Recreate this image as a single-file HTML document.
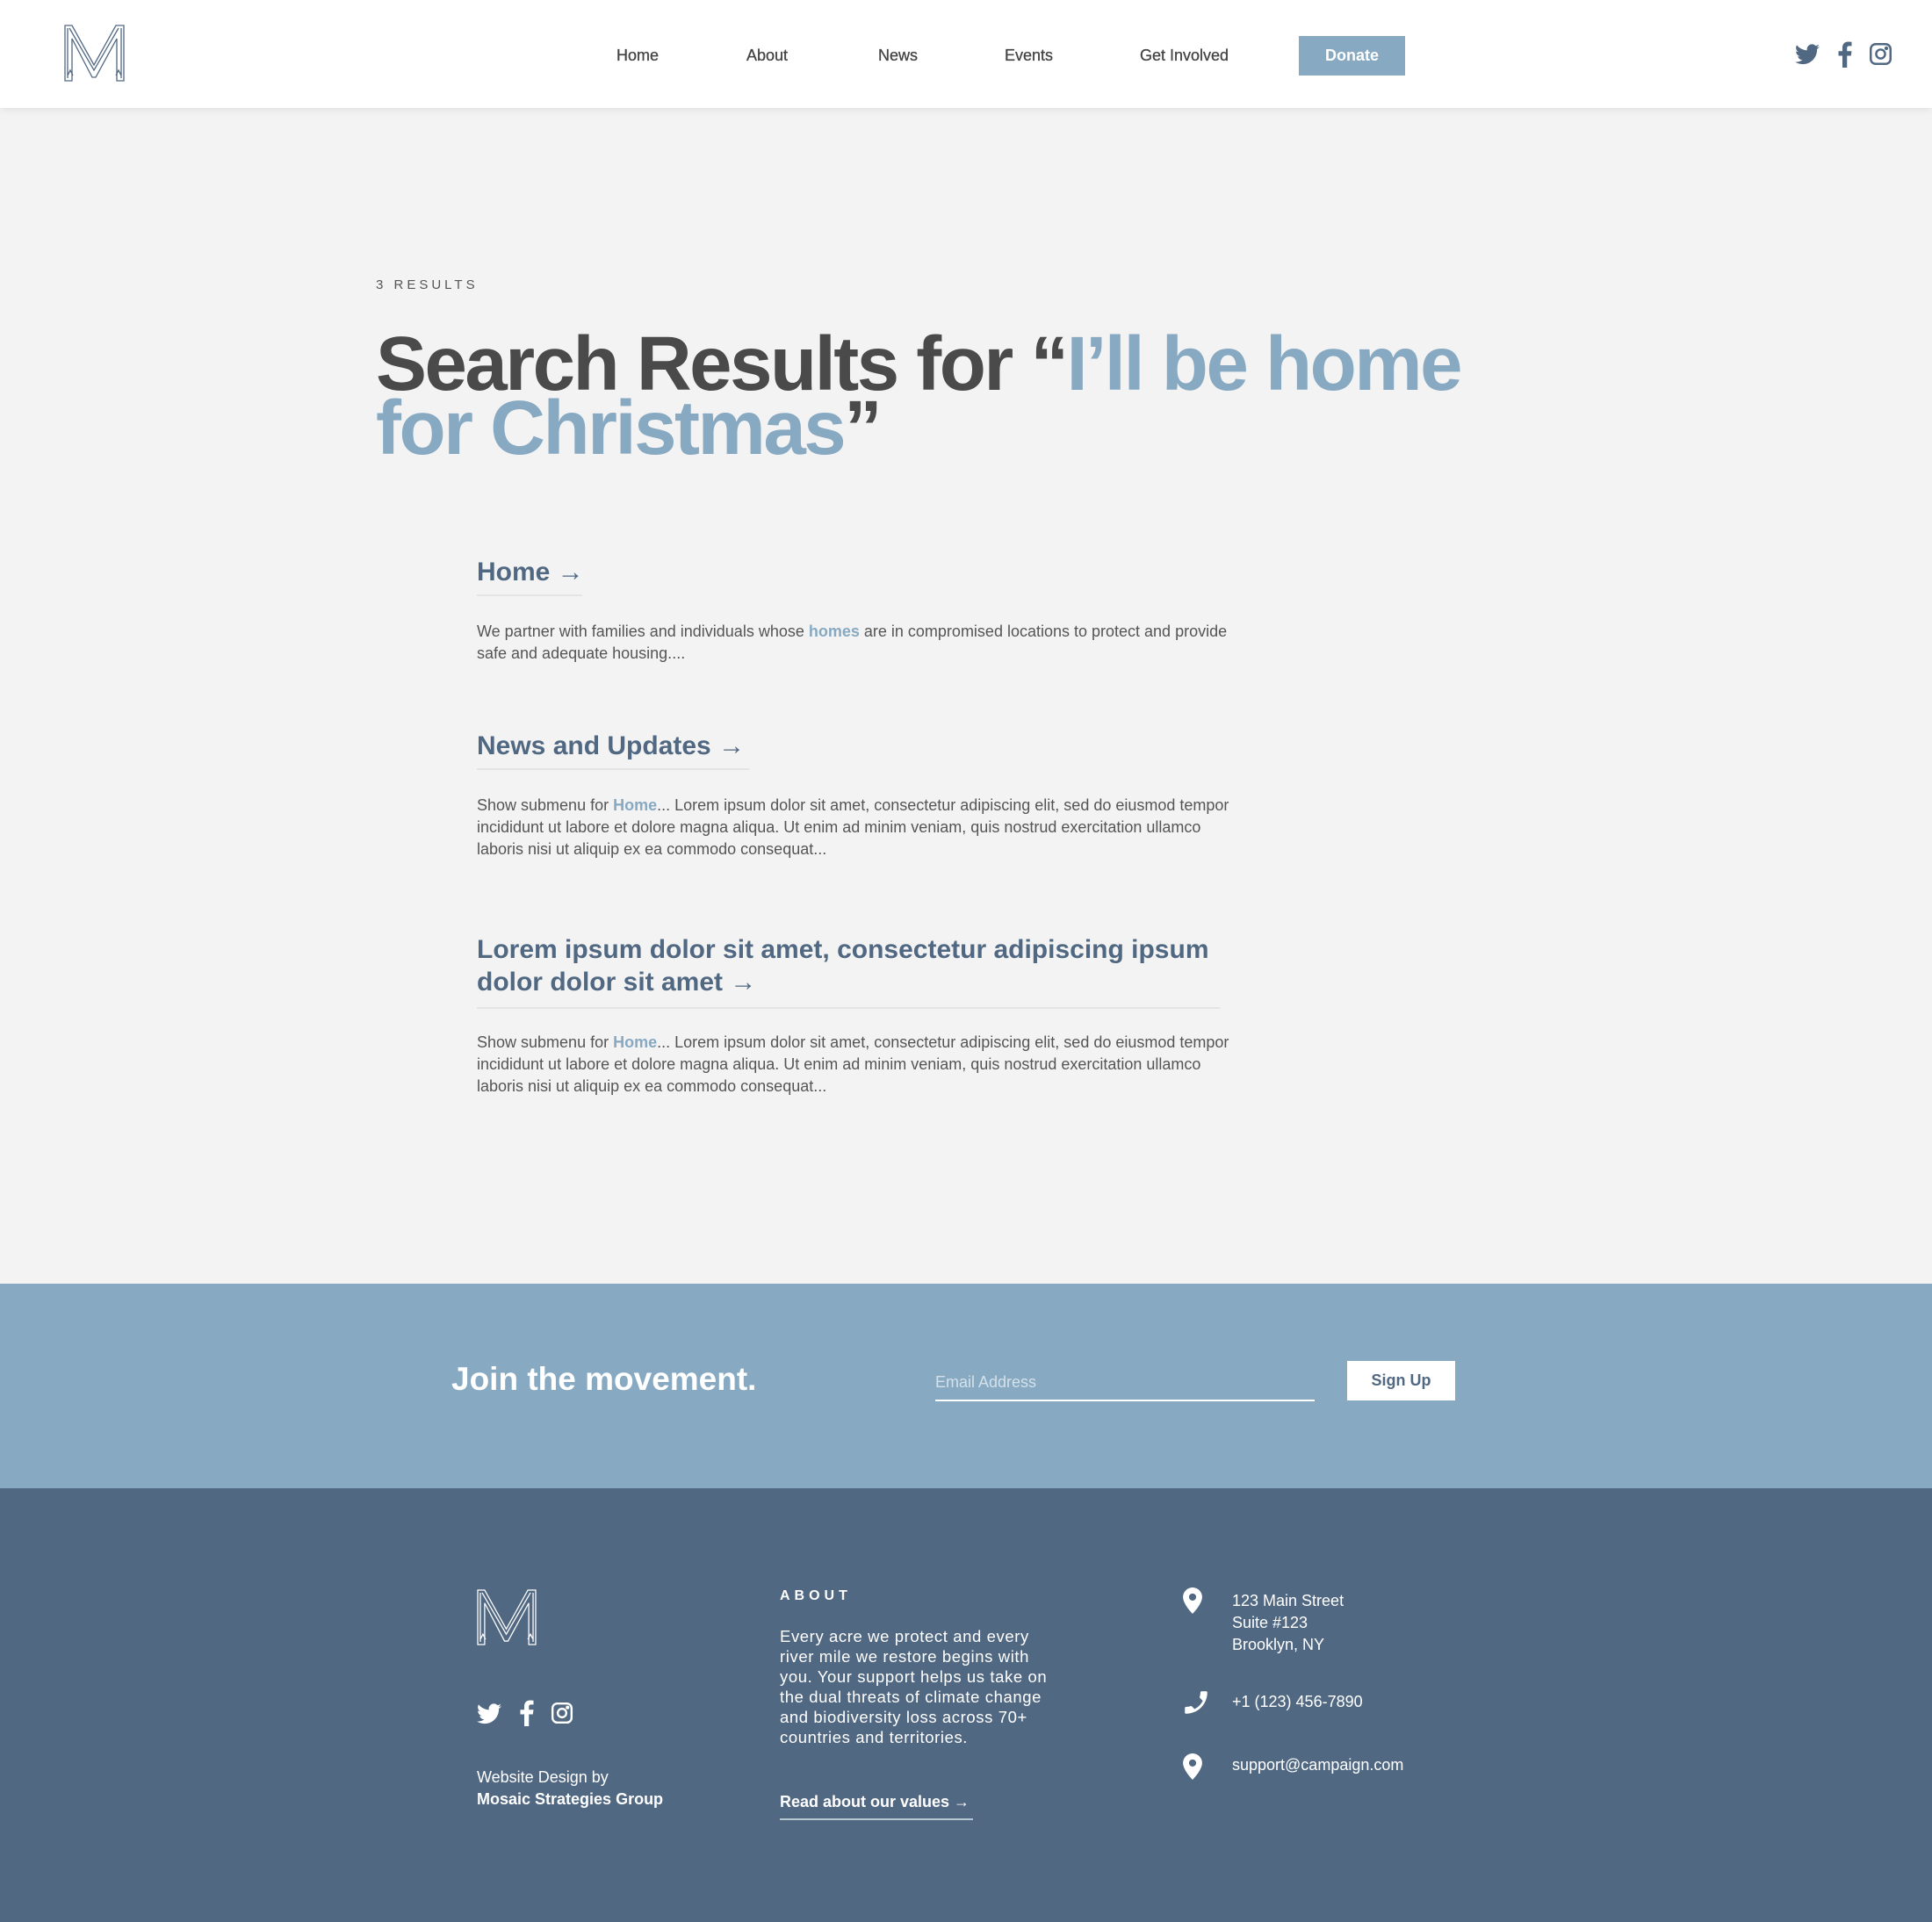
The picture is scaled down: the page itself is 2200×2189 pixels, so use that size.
<!DOCTYPE html>
<html><head><meta charset="utf-8"><style>
*{margin:0;padding:0;box-sizing:border-box}
body{width:2200px;height:2189px;background:#f3f3f3;font-family:"Liberation Sans",sans-serif;position:relative;overflow:hidden;color:#555}
.a{position:absolute;white-space:nowrap}
header{position:absolute;left:0;top:0;width:2200px;height:123px;background:#fff;box-shadow:0 2px 8px rgba(0,0,0,.08)}
.nav{font-size:18px;color:#444;top:53px;font-weight:500;-webkit-text-stroke:.3px #444}
.h1{left:428px;top:378px;font-size:87px;font-weight:bold;color:#4a4a4a;line-height:73px;letter-spacing:-2.5px}
.blue{color:#87a9c2}
.t{font-size:30px;font-weight:bold;color:#516882;left:543px}
.ul{position:absolute;height:2px;background:#e4e4e4;left:543px}
.d{left:543px;font-size:18px;line-height:25px;color:#555;white-space:normal;width:865px}
.d b{color:#87a9c2;font-weight:bold}
.f{color:#fff}
</style></head><body>
<header>
<svg class="a" style="left:73px;top:28px" width="69" height="65" viewBox="0 0 69 65" fill="none" stroke="#516882" stroke-width="1.3"><path d="M1 1h8l25 45L59 1h9v63h-8V16L36 60h-4L9 16v48H1z"/><path d="M4 4v57M65 4v57M6 4l28 48 28-48M4 58l3-6 3 6M59 58l3-6 3 6"/></svg>
<div class="a nav" style="left:702px">Home</div>
<div class="a nav" style="left:850px">About</div>
<div class="a nav" style="left:1000px">News</div>
<div class="a nav" style="left:1144px">Events</div>
<div class="a nav" style="left:1298px">Get Involved</div>
<div class="a" style="left:1479px;top:41px;width:121px;height:45px;background:#87a9c2;color:#fff;font-size:18px;font-weight:bold;text-align:center;line-height:45px">Donate</div>
<svg class="a" style="left:2044px;top:50px" width="28" height="24" viewBox="0 0 24 20"><path fill="#516882" d="M24 2.4a10 10 0 0 1-2.8.8A5 5 0 0 0 23.3.4a10 10 0 0 1-3.1 1.2A4.9 4.9 0 0 0 11.8 6 14 14 0 0 1 1.7.9a4.9 4.9 0 0 0 1.5 6.6A4.9 4.9 0 0 1 1 6.9 4.9 4.9 0 0 0 4.9 11.8a5 5 0 0 1-2.2.1 4.9 4.9 0 0 0 4.6 3.4A9.9 9.9 0 0 1 0 17.3 14 14 0 0 0 7.5 19.5c9 0 14-7.5 14-14v-.6A10 10 0 0 0 24 2.4z"/></svg>
<svg class="a" style="left:2093px;top:47px" width="16" height="30" viewBox="0 0 10 20"><path fill="#516882" d="M6.5 20v-9h3l.5-3.5H6.5V5.3c0-1 .3-1.7 1.7-1.7H10V.5A24 24 0 0 0 7.4.3C4.8.3 3 1.9 3 4.8v2.7H0V11h3v9z"/></svg>
<svg class="a" style="left:2128px;top:48px" width="27" height="27" viewBox="0 0 24 24" fill="none" stroke="#516882" stroke-width="2.2"><rect x="2" y="2" width="20" height="20" rx="5"/><circle cx="12" cy="12" r="4.5"/><circle cx="17.8" cy="6.2" r=".8" fill="#516882"/></svg>
</header>

<div class="a" style="left:428px;top:316px;font-size:15px;letter-spacing:4px;color:#555">3 RESULTS</div>
<div class="a h1">Search Results for “<span class="blue">I’ll be home</span><br><span class="blue">for Christmas</span>”</div>

<div class="a t" style="top:635px">Home →</div>
<div class="ul" style="top:677px;width:120px"></div>
<div class="a d" style="top:707px">We partner with families and individuals whose <b>homes</b> are in compromised locations to protect and provide safe and adequate housing....</div>

<div class="a t" style="top:833px">News and Updates →</div>
<div class="ul" style="top:875px;width:310px"></div>
<div class="a d" style="top:905px">Show submenu for <b>Home</b>... Lorem ipsum dolor sit amet, consectetur adipiscing elit, sed do eiusmod tempor incididunt ut labore et dolore magna aliqua. Ut enim ad minim veniam, quis nostrud exercitation ullamco laboris nisi ut aliquip ex ea commodo consequat...</div>

<div class="a t" style="top:1063px;line-height:37px">Lorem ipsum dolor sit amet, consectetur adipiscing ipsum<br>dolor dolor sit amet →</div>
<div class="ul" style="top:1147px;width:846px"></div>
<div class="a d" style="top:1175px">Show submenu for <b>Home</b>... Lorem ipsum dolor sit amet, consectetur adipiscing elit, sed do eiusmod tempor incididunt ut labore et dolore magna aliqua. Ut enim ad minim veniam, quis nostrud exercitation ullamco laboris nisi ut aliquip ex ea commodo consequat...</div>

<div class="a" style="left:0;top:1462px;width:2200px;height:233px;background:#87a9c2"></div>
<div class="a f" style="left:514px;top:1550px;font-size:37px;font-weight:bold">Join the movement.</div>
<div class="a" style="left:1065px;top:1564px;font-size:18px;color:#d4e1ea">Email Address</div>
<div class="a" style="left:1065px;top:1594px;width:432px;height:2px;background:#fff"></div>
<div class="a" style="left:1534px;top:1550px;width:123px;height:45px;background:#fff;color:#516882;font-size:18px;font-weight:bold;text-align:center;line-height:45px">Sign Up</div>

<div class="a" style="left:0;top:1695px;width:2200px;height:494px;background:#516882"></div>
<svg class="a" style="left:543px;top:1810px" width="68" height="64" viewBox="0 0 69 65" fill="none" stroke="#fff" stroke-width="1.3"><path d="M1 1h8l25 45L59 1h9v63h-8V16L36 60h-4L9 16v48H1z"/><path d="M4 4v57M65 4v57M6 4l28 48 28-48M4 58l3-6 3 6M59 58l3-6 3 6"/></svg>
<svg class="a" style="left:543px;top:1940px" width="28" height="24" viewBox="0 0 24 20"><path fill="#fff" d="M24 2.4a10 10 0 0 1-2.8.8A5 5 0 0 0 23.3.4a10 10 0 0 1-3.1 1.2A4.9 4.9 0 0 0 11.8 6 14 14 0 0 1 1.7.9a4.9 4.9 0 0 0 1.5 6.6A4.9 4.9 0 0 1 1 6.9 4.9 4.9 0 0 0 4.9 11.8a5 5 0 0 1-2.2.1 4.9 4.9 0 0 0 4.6 3.4A9.9 9.9 0 0 1 0 17.3 14 14 0 0 0 7.5 19.5c9 0 14-7.5 14-14v-.6A10 10 0 0 0 24 2.4z"/></svg>
<svg class="a" style="left:592px;top:1936px" width="16" height="30" viewBox="0 0 10 20"><path fill="#fff" d="M6.5 20v-9h3l.5-3.5H6.5V5.3c0-1 .3-1.7 1.7-1.7H10V.5A24 24 0 0 0 7.4.3C4.8.3 3 1.9 3 4.8v2.7H0V11h3v9z"/></svg>
<svg class="a" style="left:627px;top:1938px" width="26" height="26" viewBox="0 0 24 24" fill="none" stroke="#fff" stroke-width="2.2"><rect x="2" y="2" width="20" height="20" rx="5"/><circle cx="12" cy="12" r="4.5"/><circle cx="17.8" cy="6.2" r=".8" fill="#fff"/></svg>
<div class="a f" style="left:543px;top:2012px;font-size:18px;line-height:25px">Website Design by<br><b>Mosaic Strategies Group</b></div>

<div class="a f" style="left:888px;top:1809px;font-size:16px;letter-spacing:5px;font-weight:bold">ABOUT</div>
<div class="a f" style="left:888px;top:1852px;font-size:18.5px;line-height:23px;white-space:normal;width:305px;letter-spacing:.6px">Every acre we protect and every river mile we restore begins with you. Your support helps us take on the dual threats of climate change and biodiversity loss across 70+ countries and territories.</div>
<div class="a f" style="left:888px;top:2042px;font-size:18px;font-weight:bold">Read about our values →</div>
<div class="a" style="left:888px;top:2071px;width:220px;height:2px;background:#b8c6d4"></div>

<svg class="a" style="left:1347px;top:1808px" width="22" height="30" viewBox="0 0 16 22"><path fill="#fff" d="M8 0a8 8 0 0 0-8 8c0 6 8 14 8 14s8-8 8-14a8 8 0 0 0-8-8zm0 11a3 3 0 1 1 0-6 3 3 0 0 1 0 6z"/></svg>
<div class="a f" style="left:1403px;top:1811px;font-size:18px;line-height:25px">123 Main Street<br>Suite #123<br>Brooklyn, NY</div>
<svg class="a" style="left:1345px;top:1922px" width="34" height="34" viewBox="0 0 24 24"><path fill="#fff" d="M20 15.5c-1.2 0-2.4-.2-3.6-.6a1 1 0 0 0-1 .2l-2.2 2.2a15 15 0 0 1-6.6-6.6l2.2-2.2a1 1 0 0 0 .3-1A11 11 0 0 1 8.5 4a1 1 0 0 0-1-1H4a1 1 0 0 0-1 1 17 17 0 0 0 17 17 1 1 0 0 0 1-1v-3.5a1 1 0 0 0-1-1z" transform="scale(-1,1) translate(-24,0)"/></svg>
<div class="a f" style="left:1403px;top:1928px;font-size:18px">+1 (123) 456-7890</div>
<svg class="a" style="left:1347px;top:1997px" width="22" height="30" viewBox="0 0 16 22"><path fill="#fff" d="M8 0a8 8 0 0 0-8 8c0 6 8 14 8 14s8-8 8-14a8 8 0 0 0-8-8zm0 11a3 3 0 1 1 0-6 3 3 0 0 1 0 6z"/></svg>
<div class="a f" style="left:1403px;top:2000px;font-size:18px">support@campaign.com</div>
</body></html>
